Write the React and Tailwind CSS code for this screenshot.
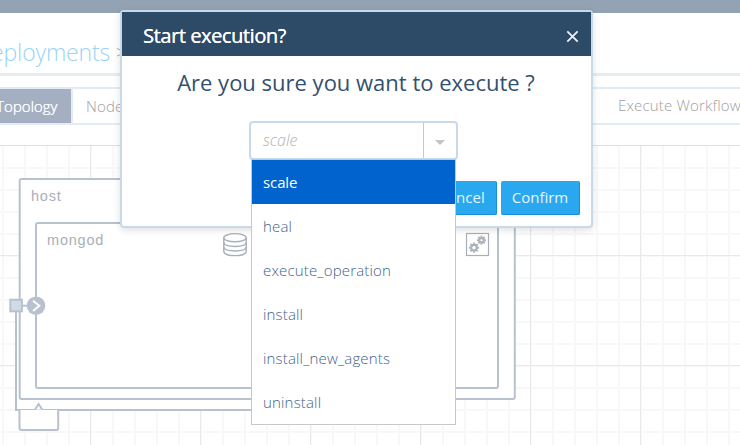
import React from "react";

const WORKFLOWS = ["scale", "heal", "execute_operation", "install", "install_new_agents", "uninstall"];
const STEPS = Array.from({ length: 35 }, (_, i) => i);

function Grid() {
  return (
    <g>
      {STEPS.map((i) => (
        <rect key={"v" + i} x={2 + i * 22} y="0" width="2" height="300" fill="#f8f8f9" />
      ))}
      {STEPS.slice(0, 14).map((i) => (
        <rect key={"h" + i} x="0" y={21 + i * 22} width="740" height="2" fill="#f8f8f9" />
      ))}
      {[90, 200, 310, 420, 530, 640].map((x) => (
        <rect key={x} x={x} y="0" width="1" height="300" fill="#e8e9ea" />
      ))}
      {[109, 219].map((y) => (
        <rect key={y} x="0" y={y} width="740" height="1" fill="#e8e9ea" />
      ))}
    </g>
  );
}

function Gear({ x, y, r }) {
  return (
    <g transform={`translate(${x} ${y})`} stroke="#aab1bb" fill="none">
      <circle r={r} strokeWidth="2.1" />
      {[0, 45, 90, 135, 180, 225, 270, 315].map((a) => (
        <line key={a} x1={r + 0.6} x2={r + 2.3} y1="0" y2="0" strokeWidth="1.9" transform={`rotate(${a})`} />
      ))}
    </g>
  );
}

function Topology() {
  return (
    <svg className="block h-[299px] w-[740px]" viewBox="0 0 740 299">
      <Grid />
      <g fill="white" stroke="#b8c2ce" strokeWidth="2">
        <path d="M16 160V264H300V160Z" />
        <path d="M19.5 264V282Q19.5 284 21.5 284H56.2Q58.2 284 58.2 282V264" />
        <path d="M35 263.5L38.6 258L42.2 263.5" />
        <rect x="19.7" y="33" width="495.1" height="220" rx="2" />
        <rect x="36" y="77" width="462" height="165" rx="2" />
        <path d="M22 159.7H28" />
        <rect x="10.3" y="153.7" width="11.6" height="11.6" fill="#d1dbe8" />
      </g>
      <circle cx="36" cy="159.7" r="9.3" fill="#b8c2ce" />
      <path d="M33 154.7L39.3 159.7L33 165" fill="none" stroke="white" strokeWidth="2" />
      <g fill="#a9afb8" fontFamily="Liberation Sans, Arial, sans-serif" fontSize="14.5" letterSpacing="0.8">
        <text x="31" y="55">host</text>
        <text x="47" y="99">mongod</text>
      </g>
      <g fill="none" stroke="#a8afb8" strokeWidth="1.4">
        <ellipse cx="235" cy="91.7" rx="11.2" ry="4.1" />
        <path d="M223.8 91.7V105.6C223.8 111 246.2 111 246.2 105.6V91.7" />
        <path d="M223.8 96.7C224.8 101.8 245.2 101.8 246.2 96.7M223.8 101.2C224.8 106.3 245.2 106.3 246.2 101.2" />
        <rect x="466.5" y="87.5" width="22" height="22" strokeWidth="1.2" />
      </g>
      <Gear x={474} y={101.7} r={2.8} />
      <Gear x={481.5} y={94.2} r={2.2} />
    </svg>
  );
}

function Dialog() {
  return (
    <section className="absolute left-[120px] top-[10px] flex h-[218px] w-[473px] flex-col rounded-[4px] border-2 border-[#c8daea] bg-white shadow-[0_2px_7px_rgba(0,0,0,0.13)]">
      <header className="flex h-[44px] shrink-0 items-center justify-between bg-[#2d4a67] pl-[21px] pr-[12px] text-white">
        <h2 className="pt-[3px] text-[20px] leading-[28px] tracking-[-0.42px] [text-shadow:0.2px_0_0_white]">Start execution?</h2>
        <svg className="mt-[4px] h-[13px] w-[13px]" viewBox="0 0 13 13" stroke="#eef2f5" strokeWidth="1.8">
          <path d="M1.3 1.3L11.7 11.7M11.7 1.3L1.3 11.7" />
        </svg>
      </header>
      <p className="-ml-px mt-[10px] whitespace-nowrap text-center text-[22px] leading-[32px] text-[#34506f]">
        Are you sure you want to execute ?
      </p>
      <div className="relative ml-[127px] mt-[23px] w-[209px]">
        <div className="flex h-[39px] rounded-[4px] border-2 border-[#c8daea] bg-white">
          <span className="flex-1 pl-[12px] text-[16px] font-light italic leading-[34px] text-[#b3b3b3]">scale</span>
          <span className="flex w-[33px] items-center justify-center border-l border-[#c8c8c8]">
            <svg className="mt-[4px] h-[5px] w-[10px]" viewBox="0 0 10 5" fill="#c4c4c4">
              <path d="M0 0H10L5 5Z" />
            </svg>
          </span>
        </div>
        <ul className="absolute left-[2px] top-[38px] z-10 w-[205px] border border-[#c8c8c8] bg-white text-[15px] font-light leading-[44px] tracking-[0.17px] text-[#44648a]">
          {WORKFLOWS.map((name, i) => (
            <li
              key={name}
              className={i === 0 ? "h-[44px] bg-[#0063ce] pl-[11px] font-normal tracking-[-0.1px] text-white" : "h-[44px] pl-[11px]"}
            >
              {name}
            </li>
          ))}
        </ul>
      </div>
      <footer className="mr-[11px] mt-[21px] flex justify-end gap-[4px] text-[15px] leading-[33px] text-[#e6f5fd]">
        <button className="h-[34px] w-[70px] rounded-[2px] border-b border-r border-[#168fd9] bg-[#2aa8ef]">Cancel</button>
        <button className="h-[34px] w-[79px] rounded-[2px] border-b border-r border-[#168fd9] bg-[#2aa8ef]">Confirm</button>
      </footer>
    </section>
  );
}

export default function App() {
  return (
    <main className="relative h-[445px] w-[740px] overflow-hidden bg-white font-['Open_Sans',sans-serif]">
      <div className="h-[13px] bg-[#94a3b3]" />
      <div className="flex h-[60px] items-center gap-[6px] whitespace-nowrap pt-[18px] text-[23px] font-light">
        <span className="-ml-[25px] tracking-[-0.15px] text-[#98d4fa]">Deployments</span>
        <span className="text-[18px] text-[#8c9299]">&gt;</span>
      </div>
      <div className="h-[3px] bg-[#e6edf1]" />
      <nav className="mt-[11px] flex h-[38px] justify-between overflow-hidden whitespace-nowrap border-y-2 border-[#e3ebf5] text-[15px] font-light leading-[35px] text-[#a0a0a0]">
        <div className="flex">
          <span className="w-[73px] border-r-2 border-[#e3ebf5] bg-[#a4b0c2] text-white">
            <span className="-ml-[4px] [text-shadow:0.3px_0_0_white]">Topology</span>
          </span>
          <span className="pl-[13px] tracking-[0.15px]">Nodes</span>
        </div>
        <span className="w-[122px] leading-[33px] tracking-[0.18px]">Execute Workflow</span>
      </nav>
      <div className="mt-[20px] border-t border-[#dedfe0]">
        <Topology />
      </div>
      <Dialog />
    </main>
  );
}
